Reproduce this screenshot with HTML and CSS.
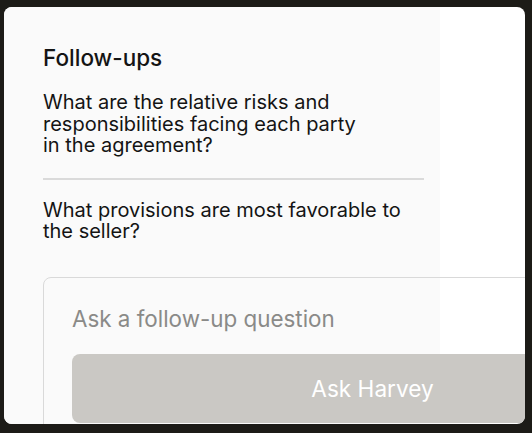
FILE: index.html
```html
<!DOCTYPE html>
<html lang="en">
<head>
<meta charset="utf-8">
<title>Follow-ups</title>
<link rel="stylesheet" href="styles.css">
</head>
<body>
<div class="card">
  <div class="panel">
    <h2 class="title">Follow-ups</h2>
    <p class="question">What are the relative risks and<br>responsibilities facing each party<br>in the agreement?</p>
    <hr class="divider">
    <p class="question q2">What provisions are most favorable to<br>the seller?</p>
    <div class="ask">
      <div class="placeholder">Ask a follow-up question</div>
      <button class="ask-btn" type="button">Ask Harvey</button>
    </div>
  </div>
  <div class="side"></div>
</div>
</body>
</html>
```
FILE: styles.css
```css
html, body {
  margin: 0;
  padding: 0;
}
body {
  background: #1c1b17;
  width: 532px;
  height: 433px;
  overflow: hidden;
  font-family: Inter, "Noto Sans", sans-serif;
  color: #141414;
}
.card {
  margin: 7px 0 0 4px;
  width: 521px;
  height: 417px;
  border-radius: 8px;
  overflow: hidden;
  background: #ffffff;
  display: grid;
  grid-template-columns: 436px 1fr;
}
.panel {
  background: #fafafa;
  padding: 37px 0 0 39px;
  min-width: 0;
}
.title {
  margin: 0;
  font-size: 22.5px;
  line-height: 27px;
  font-weight: 500;
}
.question {
  margin: 21px 0 0;
  font-size: 20px;
  line-height: 21.5px;
  font-weight: 400;
}
.divider {
  margin: 21px 0 0;
  width: 381px;
  height: 2px;
  border: 0;
  background: #dadada;
}
.q2 {
  margin-top: 20px;
}
.ask {
  margin-top: 34px;
  width: 660px;
  border: 1px solid #d9d9d9;
  border-radius: 8px;
  padding: 27px 29px 0 28px;
  box-sizing: border-box;
  height: 160px;
}
.placeholder {
  font-size: 22.4px;
  line-height: 27px;
  color: #8a8a88;
}
.ask-btn {
  display: block;
  margin-top: 22px;
  width: 100%;
  border: 0;
  border-radius: 8px;
  background: #cac8c4;
  color: #ffffff;
  font-family: inherit;
  font-size: 22.6px;
  line-height: 27px;
  padding: 21px 0;
  text-align: center;
}
```
